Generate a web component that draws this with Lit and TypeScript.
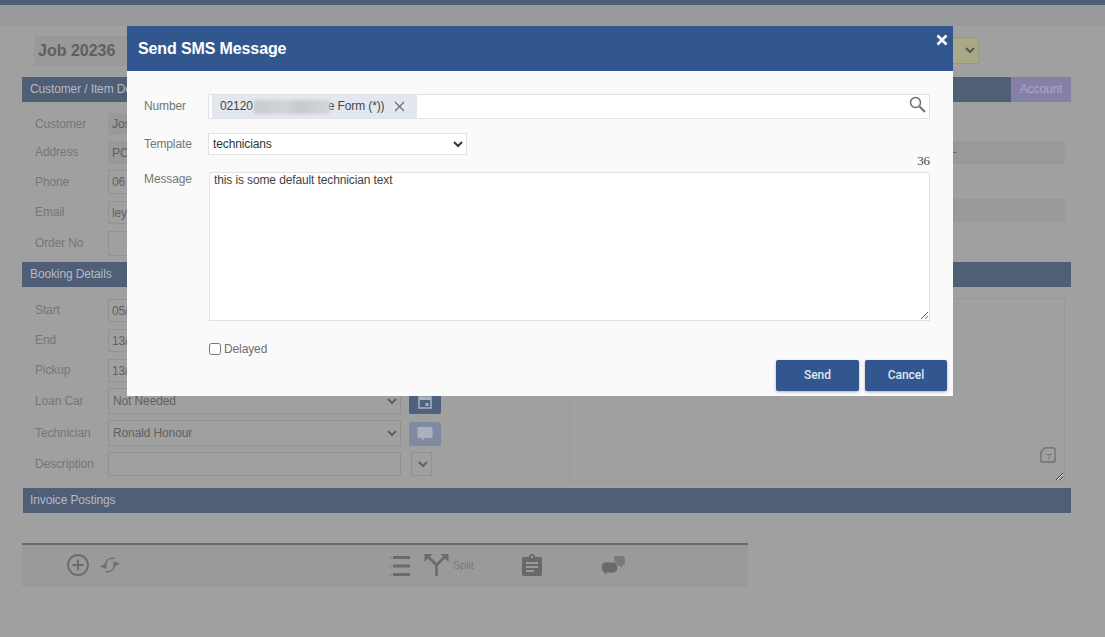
import { LitElement, html, css, svg } from "lit";
import { customElement } from "lit/decorators.js";

const plus = svg`<circle cx="11" cy="11" r="10" fill="none" stroke="#6b6b6b" stroke-width="1.800"/><path d="M11 5.500v11M5.500 11h11" stroke="#6b6b6b" stroke-width="1.800"/>`;
const refresh = svg`<path d="M5.500 9C6.500 5 10 2.500 14.500 3.500" fill="none" stroke="#707070" stroke-width="1.500"/><path d="M14.500 11C13.500 15 10 17.500 5.500 16.500" fill="none" stroke="#707070" stroke-width="1.500"/><path d="M0 11.500L6.500 8 6.500 14zM20 8.500L13.500 6 13.500 12z" fill="#707070"/>`;
const checks = svg`<path d="M1 4l1 1 2-3M1 12.500l1 1 2-3M1 21l1 1 2-3" fill="none" stroke="#6d9460" stroke-width="1"/><path d="M5 2h17v3H5zM5 10.500h17v3H5zM5 19h17v3H5z" fill="#6b6b6b"/>`;
const split = svg`<path d="M13 22V11L5 3M13 11l8-8" fill="none" stroke="#6b6b6b" stroke-width="2.600"/><path d="M1 0h8L1 8zM25 0h-8l8 8z" fill="#6b6b6b"/>`;
const clip = svg`<path fill="#686868" d="M2 3h5a3 3 0 0 1 6 0h5a2 2 0 0 1 2 2v15a2 2 0 0 1-2 2H2a2 2 0 0 1-2-2V5a2 2 0 0 1 2-2z"/><path fill="#9a9a9a" d="M4 8h12v2H4zM4 12h12v2H4zM4 16h8v2H4z"/><circle cx="10" cy="3" r="1.200" fill="#9a9a9a"/>`;
const chat = svg`<path fill="#7a7a7a" d="M13 1h7a4 4 0 0 1 4 4v2a4 4 0 0 1-2.500 3.700L20 13l-.500-2H14z"/><path fill="#6a6a6a" stroke="#9a9a9a" stroke-width=".800" d="M5 7h7a4.500 4.500 0 0 1 4.500 4.500v2A4.500 4.500 0 0 1 12 18H6l-2.500 3v-3.300A4.500 4.500 0 0 1 .500 13.500v-2A4.500 4.500 0 0 1 5 7z"/>`;
const fileT = svg`<path d="M5 .8h8.500a1.500 1.500 0 0 1 1.500 1.500V14a1 1 0 0 1-1 1H2a1 1 0 0 1-1-1V5z" fill="none" stroke="#6e6e6e" stroke-width="1.300"/><path d="M6 7.500h6M9 7.500v5" stroke="#777" stroke-width="1" fill="none"/>`;

@customElement("app-root")
export class AppRoot extends LitElement {
  static styles = css`
    :host { display: block; position: relative; width: 1105px; height: 637px; overflow: hidden;
      background: #a0a0a0; font: 12px "Liberation Sans", Arial, sans-serif; color: #5a5a5a; letter-spacing: -0.12px; }
    * { box-sizing: border-box; }
    .topbar { height: 5px; background: #4f5f78; }
    .band { height: 21px; background: #999a9b; }
    .title-row { display: flex; justify-content: space-between; margin: 10px 126px 0 34px; height: 30px; }
    .job { width: 300px; background: #999; font-size: 16px; font-weight: 700; color: #5f5f5f; line-height: 30px; padding-left: 4px; letter-spacing: 0; }
    .status { width: 80px; margin-top: 1px; height: 27px; border: 1px solid #979780; background: #a9a988; color: #555; font: 12px "Liberation Sans", sans-serif; }
    .sec { display: flex; align-items: center; height: 25px; margin: 11px 34px 0 22px; padding: 0 0 2px 8px; background: #505e76; color: #b4bac4; }
    .sec.next { margin-top: 6px; }
    .sec.inv { margin: 12px 34px 0 23px; padding-left: 7px; }
    .sec .spacer { flex: 1; }
    .account { align-self: stretch; width: 60px; margin-bottom: -2px; background: #8580a8; color: #aba8c5; display: flex; align-items: center; justify-content: center; padding-bottom: 2px; }
    .split-body { display: grid; grid-template-columns: 534px 496px; padding-left: 35px; }
    .cust { padding-top: 11px; height: 154px; }
    .book { padding-top: 12px; height: 189px; }
    .fields { display: grid; grid-template-columns: 73px 293px 8px 32px; align-items: start; }
    .cust .fields { grid-template-rows: 28px 29px 31px 30px 25px; }
    .book .fields { grid-template-rows: 30px 30px 29px 32px 32px 24px; }
    .lab { grid-column: 1; display: flex; align-items: center; padding-bottom: 1px; color: #767676; }
    .ctl { grid-column: 2; width: 293px; border: 1px solid #939393; background: transparent; color: #606060;
      font: 12px "Liberation Sans", sans-serif; letter-spacing: -0.12px; padding: 0 3px; display: flex; align-items: center; outline: none; }
    select.ctl { padding: 0; }
    .flat { border: 0; background: #999; padding-left: 4px; }
    .h22 { height: 22px; } .h23 { height: 23px; } .h24 { height: 24px; } .h25 { height: 25px; } .h26 { height: 26px; }
    .side { grid-column: 4; width: 32px; border-radius: 2px; display: flex; align-items: center; justify-content: center; }
    .side.cal { height: 26px; background: #50607f; }
    .side.msg { height: 24px; margin-top: 2px; background: #808ba3; }
    .mini { grid-column: 3 / span 2; margin-left: 10px; width: 21px; height: 24px; padding: 0; border: 1px solid #939393; background: transparent; color: #606060; }
    .ghost { display: block; background: #999; width: 115px; height: 23px; margin-left: 381px; color: #666; line-height: 23px; }
    .ghost.one { margin-top: 28px; }
    .ghost.two { margin-top: 35px; }
    .notes { position: relative; display: block; width: 496px; height: 184px; margin-top: -1px; }
    .notes textarea { width: 100%; height: 100%; display: block; background: transparent; border: 1px solid #979797; outline: none; }
    .notes svg { position: absolute; left: 471px; top: 149px; }
    .toolbar { display: flex; align-items: center; width: 726px; height: 44px; margin: 30px 0 0 22px; padding: 0 0 2px 45px;
      border-top: 2px solid #6a6a6a; background: #9a9a9a; }
    .toolbar svg { display: block; flex: none; }
    .i-ref { margin-left: 11px; }
    .i-check { margin-left: 268px; }
    .i-split { margin-left: 12px; }
    .split-t { margin-left: 3px; font-size: 11px; color: #7a7a7a; width: 69px; }
    .i-chat { margin-left: 59px; }

    .modal { position: absolute; left: 127px; top: 26px; width: 826px; height: 370px; background: #fafafa; }
    .head { height: 45px; background: #32578f; color: #fff; font-size: 16px; font-weight: 700; padding: 14px 0 0 11px; line-height: 18px; position: relative; }
    .close { position: absolute; right: 5px; top: 8px; width: 12px; height: 12px; display: block; }
    .form { display: grid; grid-template-columns: 64px 722px; padding: 23px 0 0 17px; }
    .mlab { color: #767676; display: flex; align-items: center; }
    .num-lab { padding-bottom: 2px; }
    .number { height: 25px; border: 1px solid #e2e2e2; background: #fff; display: flex; align-items: stretch; padding-left: 3px; position: relative; }
    .chip { position: relative; display: flex; align-items: center; width: 205px; padding: 0 0 2px 8px; background: #e3e8f0; color: #444; }
    .blur { position: absolute; z-index: 1; left: 42px; top: 5px; width: 76px; height: 14px; background: linear-gradient(90deg,#c8cacd,#d2d4d7 40%,#c6c8cc 60%,#d4d6d9); filter: blur(1.500px); }
    .chip-rest { margin-left: 75px; }
    .chip svg { margin-left: 10px; margin-top: 2px; }
    .search { position: absolute; right: 3px; top: 1px; }
    .tmpl-lab { margin-top: 14px; }
    .tmpl { margin-top: 14px; width: 259px; height: 22px; padding: 0; border: 1px solid #e2e2e2; background: #fff; color: #333; font: 12px "Liberation Sans", sans-serif; letter-spacing: -0.12px; outline: none; }
    .count { grid-column: 2; height: 17px; text-align: right; font: 13px "Liberation Serif", serif; color: #444; line-height: 11px; }
    .msg-lab { align-items: flex-start; }
    .msgbox { width: 721px; height: 149px; margin-left: 1px; padding: 0 4px; display: block; border: 1px solid #e2e2e2; background: #fff; color: #444; font: 12px "Liberation Sans", sans-serif; letter-spacing: -0.12px; outline: none; }
    .delay { grid-column: 2; display: flex; align-items: center; height: 14px; margin: 21px 0 0 1px; color: #707070; }
    .delay input { width: 12px; height: 12px; margin: 0 3px 0 0; }
    .actions { display: flex; justify-content: flex-end; gap: 6px; padding: 4px 6px 0 0; }
    .btn { width: 83px; height: 31px; border: 0; padding: 0 0 2px; border-radius: 2px; background: #32578f; color: #dfe6f0; font: 500 12px Roboto, sans-serif;
      box-shadow: 0 1px 3px rgba(0,0,0,.3); }
    .btn.cancel { width: 82px; }
  `;

  render() {
    return html`
      <div class="topbar"></div>
      <div class="band"></div>
      <div class="title-row">
        <div class="job">Job 20236</div>
        <select class="status"><option></option></select>
      </div>
      <div class="sec"><span>Customer / Item Details</span><span class="spacer"></span><span class="account">Account</span></div>
      <div class="split-body cust">
        <div class="fields">
          <span class="lab h22">Customer</span><div class="ctl flat h22">Jos</div>
          <span class="lab h23">Address</span><div class="ctl flat h23">PO</div>
          <span class="lab h24">Phone</span><input class="ctl h24" .value=${"06"} />
          <span class="lab h23">Email</span><input class="ctl h23" .value=${"ley"} />
          <span class="lab h25">Order No</span><input class="ctl h25" />
        </div>
        <div>
          <span class="ghost one">–</span>
          <span class="ghost two"></span>
        </div>
      </div>
      <div class="sec next">Booking Details</div>
      <div class="split-body book">
        <div class="fields">
          <span class="lab h23">Start</span><input class="ctl h23" .value=${"05/"} />
          <span class="lab h23">End</span><input class="ctl h23" .value=${"13/"} />
          <span class="lab h23">Pickup</span><input class="ctl h23" .value=${"13/"} />
          <span class="lab h26">Loan Car</span><select class="ctl h26"><option>Not Needed</option></select>
          <span class="side cal"><svg width="14" height="15" viewBox="0 0 14 15"><path d="M1 3h12v11H1z" fill="none" stroke="#aab0bd" stroke-width="1.500"/><path d="M1 3h12v3H1z" fill="#aab0bd"/><path d="M7.500 9h3v3h-3z" fill="#aab0bd"/></svg></span>
          <span class="lab h26">Technician</span><select class="ctl h26"><option>Ronald Honour</option></select>
          <span class="side msg"><svg width="16" height="16" viewBox="0 0 16 16"><path d="M1.500 1h13a1 1 0 0 1 1 1v9a1 1 0 0 1-1 1H8l-3 3v-3H1.500a1 1 0 0 1-1-1V2a1 1 0 0 1 1-1z" fill="#aab0bd"/></svg></span>
          <span class="lab h24">Description</span><input class="ctl h24" />
          <select class="mini"><option></option></select>
        </div>
        <div class="notes">
          <textarea></textarea>
          <svg width="16" height="16" viewBox="0 0 16 16">${fileT}</svg>
        </div>
      </div>
      <div class="sec inv">Invoice Postings</div>
      <div class="toolbar">
        <svg width="22" height="22" viewBox="0 0 22 22">${plus}</svg>
        <svg class="i-ref" width="20" height="20" viewBox="0 0 20 20">${refresh}</svg>
        <svg class="i-check" width="23" height="23" viewBox="0 0 23 23">${checks}</svg>
        <svg class="i-split" width="27" height="23" viewBox="0 0 26 23">${split}</svg>
        <span class="split-t">Split</span>
        <svg width="20" height="22" viewBox="0 0 20 22">${clip}</svg>
        <svg class="i-chat" width="24" height="21" viewBox="0 0 24 21">${chat}</svg>
      </div>

      <div class="modal">
        <div class="head">Send SMS Message
          <svg class="close" viewBox="0 0 12 12"><path d="M1.500 1.500l9 9M10.500 1.500l-9 9" stroke="#fff" stroke-width="2.600" fill="none"/></svg>
        </div>
        <div class="form">
          <span class="mlab num-lab">Number</span>
          <div class="number">
            <div class="chip">02120<span class="blur"></span><span class="chip-rest">e Form (*))</span>
              <svg width="11" height="11" viewBox="0 0 11 11"><path d="M1 1l9 9M10 1l-9 9" stroke="#666" stroke-width="1.100" fill="none"/></svg>
            </div>
            <svg class="search" width="17" height="17" viewBox="0 0 17 17"><circle cx="6.500" cy="6.500" r="5" fill="none" stroke="#6e6e6e" stroke-width="1.500"/><path d="M10.500 10.500l5.500 5.500" stroke="#6e6e6e" stroke-width="2"/></svg>
          </div>
          <span class="mlab tmpl-lab">Template</span>
          <select class="tmpl"><option>technicians</option></select>
          <span class="count">36</span>
          <span class="mlab msg-lab">Message</span>
          <textarea class="msgbox" .value=${"this is some default technician text"}></textarea>
          <label class="delay"><input type="checkbox" />Delayed</label>
        </div>
        <div class="actions">
          <button class="btn">Send</button>
          <button class="btn cancel">Cancel</button>
        </div>
      </div>
    `;
  }
}
